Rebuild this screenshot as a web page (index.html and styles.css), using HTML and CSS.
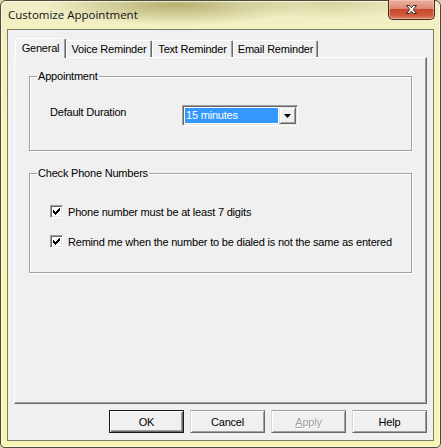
FILE: index.html
```html
<!DOCTYPE html>
<html lang="en">
<head>
    <meta charset="UTF-8">
    <title>Customize Appointment</title>
    <link rel="stylesheet" href="styles.css">
</head>
<body>
    <div class="window">
        <div class="titlebar">
            <span class="title">Customize Appointment</span>
            <button class="close" title="Close">
                <svg width="13" height="11" viewBox="0 0 13 11">
                    <path d="M1.5 1.5 L4.5 1.5 L6.5 3.8 L8.5 1.5 L11.5 1.5 L8.2 5.5 L11.5 9.5 L8.5 9.5 L6.5 7.2 L4.5 9.5 L1.5 9.5 L4.8 5.5 Z" fill="#fff" stroke="#3a2a26" stroke-width="1" stroke-linejoin="round"/>
                </svg>
            </button>
        </div>

        <div class="client">
            <div class="tabs">
                <div class="tab active">General</div>
                <div class="tab voice">Voice Reminder</div>
                <div class="tab text">Text Reminder</div>
                <div class="tab email">Email Reminder</div>
            </div>

            <div class="panel">
                <div class="group appointment">
                    <span class="group-title">Appointment</span>
                    <div class="field">
                        <span class="field-label">Default Duration</span>
                        <div class="combo">
                            <span class="combo-value">15 minutes</span>
                            <span class="combo-btn">
                                <svg width="7" height="4" viewBox="0 0 7 4"><path d="M0 0 H7 L3.5 4 Z" fill="#000"/></svg>
                            </span>
                        </div>
                    </div>
                </div>

                <div class="group phones">
                    <span class="group-title">Check Phone Numbers</span>
                    <label class="check">
                        <span class="box"><svg width="7" height="7" viewBox="0 0 7 7"><path d="M0 2 L2 4 L6 0 L7 0 L7 2 L2 7 L0 5 Z" fill="#000" shape-rendering="crispEdges"/></svg></span>
                        Phone number must be at least 7 digits
                    </label>
                    <label class="check">
                        <span class="box"><svg width="7" height="7" viewBox="0 0 7 7"><path d="M0 2 L2 4 L6 0 L7 0 L7 2 L2 7 L0 5 Z" fill="#000" shape-rendering="crispEdges"/></svg></span>
                        Remind me when the number to be dialed is not the same as entered
                    </label>
                </div>
            </div>

            <div class="actions">
                <button class="btn default">OK</button>
                <button class="btn">Cancel</button>
                <button class="btn" disabled><u>A</u>pply</button>
                <button class="btn">Help</button>
            </div>
        </div>
    </div>
</body>
</html>
```

FILE: styles.css
```css
* {
    margin: 0;
    padding: 0;
    box-sizing: border-box;
}

body {
    width: 441px;
    height: 448px;
    overflow: hidden;
    background: #d9d6a4;
    font-family: 'Liberation Sans', Arial, sans-serif;
    font-size: 11px;
    letter-spacing: -0.2px;
    color: #000;
}

.window {
    width: 441px;
    height: 448px;
    border: 1px solid #4d4c3c;
    border-radius: 6px 6px 5px 5px;
    padding: 0 6px 6px;
    display: flex;
    flex-direction: column;
    background:
        radial-gradient(ellipse 130px 20px at 175px 4px, rgba(168, 160, 92, 0.8), rgba(168, 160, 92, 0)),
        radial-gradient(ellipse 90px 16px at 330px 2px, rgba(190, 184, 120, 0.5), rgba(190, 184, 120, 0)),
        linear-gradient(180deg, #eeedc6 0, #f3f1c2 28px, #f7f4b6 120px, #f8f5b4 100%);
    box-shadow: inset 1px 1px 0 rgba(255, 255, 240, 0.7), inset -1px -1px 0 rgba(255, 255, 240, 0.7);
}

/* title bar */
.titlebar {
    height: 28px;
    display: flex;
    align-items: flex-start;
}

.title {
    line-height: 28px;
    padding-left: 1px;
    font-family: 'Open Sans', 'Noto Sans', sans-serif;
    font-size: 11.5px;
    letter-spacing: 0;
    color: #111;
}

.close {
    margin-left: auto;
    margin-right: -1px;
    margin-top: -1px;
    width: 47px;
    height: 20px;
    border: 1px solid #4a2a20;
    border-top: none;
    border-radius: 0 0 5px 5px;
    background: linear-gradient(180deg, #eab2a2 0, #dd8a74 45%, #c8472c 50%, #cf5a3c 80%, #e3846a 100%);
    box-shadow: inset 0 0 0 1px rgba(255, 210, 190, 0.5);
    display: flex;
    align-items: center;
    justify-content: center;
}

/* client area */
.client {
    flex: 1;
    border: 1px solid #7e7d66;
    background: #f0f0f0;
    padding: 8px 6px 7px 6px;
    display: flex;
    flex-direction: column;
}

.tabs {
    height: 19px;
    display: flex;
    align-items: flex-end;
    padding-left: 1px;
}

.tab {
    height: 17px;
    line-height: 16px;
    text-align: center;
    background: #f0f0f0;
    border-top: 1px solid #fff;
    border-left: 1px solid #fff;
    border-right: 1px solid #696969;
    border-radius: 2px 2px 0 0;
    box-shadow: inset -1px 0 0 #a0a0a0;
    white-space: nowrap;
}

.tab.active {
    width: 51px;
    height: 20px;
    line-height: 18px;
    margin-bottom: -1px;
    position: relative;
    z-index: 1;
}

.tab.voice { width: 86px; }
.tab.text { width: 81px; }
.tab.email { width: 85px; }

.panel {
    height: 347px;
    border: 1px solid;
    border-color: #fff #696969 #696969 #fff;
    box-shadow: inset -1px -1px 0 #a0a0a0;
    padding: 18px 0 0 14px;
}

/* group boxes */
.group {
    position: relative;
    width: 383px;
    border: 1px solid #a0a0a0;
    box-shadow: inset 1px 1px 0 #fff, 1px 1px 0 #fff;
}

.group-title {
    position: absolute;
    top: -7px;
    left: 7px;
    padding: 0 1px;
    line-height: 13px;
    background: #f0f0f0;
}

.appointment {
    height: 75px;
    padding: 28px 0 0 20px;
}

.phones {
    height: 100px;
    margin-top: 22px;
    padding: 31px 0 0 20px;
    display: flex;
    flex-direction: column;
    gap: 17px;
}

.field {
    display: flex;
    align-items: flex-start;
}

.field-label {
    width: 132px;
    line-height: 13px;
    margin-top: 1px;
}

.combo {
    width: 116px;
    height: 21px;
    display: flex;
    background: #fff;
    border: 1px solid;
    border-color: #a0a0a0 #fff #fff #a0a0a0;
    box-shadow: inset 1px 1px 0 #696969, inset -1px -1px 0 #e3e3e3;
    padding: 1px;
}

.combo-value {
    flex: 1;
    margin: 1px;
    padding-left: 1px;
    line-height: 15px;
    background: #3399ff;
    color: #fff;
}

.combo-btn {
    width: 17px;
    height: 17px;
    background: #f0f0f0;
    border: 1px solid;
    border-color: #e3e3e3 #696969 #696969 #e3e3e3;
    box-shadow: inset 1px 1px 0 #fff, inset -1px -1px 0 #a0a0a0;
    display: flex;
    align-items: center;
    justify-content: center;
}

/* checkboxes */
.check {
    display: flex;
    align-items: center;
    height: 13px;
    gap: 5px;
    white-space: nowrap;
}

.box {
    width: 13px;
    height: 13px;
    flex: none;
    background: #fff;
    border: 1px solid;
    border-color: #a0a0a0 #fff #fff #a0a0a0;
    box-shadow: inset 1px 1px 0 #696969, inset -1px -1px 0 #e3e3e3;
    display: flex;
    align-items: center;
    justify-content: center;
}

/* dialog buttons */
.actions {
    margin-top: 6px;
    display: flex;
    justify-content: flex-end;
    gap: 6px;
}

.btn {
    width: 75px;
    height: 23px;
    font-family: inherit;
    font-size: 11px;
    letter-spacing: inherit;
    color: #000;
    background: #f0f0f0;
    border: 1px solid;
    border-color: #a0a0a0 #696969 #696969 #d8d8d8;
    box-shadow: inset 1px 1px 0 #fff, inset -1px -1px 0 #a0a0a0;
}

.btn.default {
    border-color: #1a1a1a;
    box-shadow: inset 1px 1px 0 #fff, inset -1px -1px 0 #696969, inset -2px -2px 0 #a0a0a0;
}

.btn:disabled {
    color: #a0a0a0;
    text-shadow: 1px 1px 0 #fff;
}
```
